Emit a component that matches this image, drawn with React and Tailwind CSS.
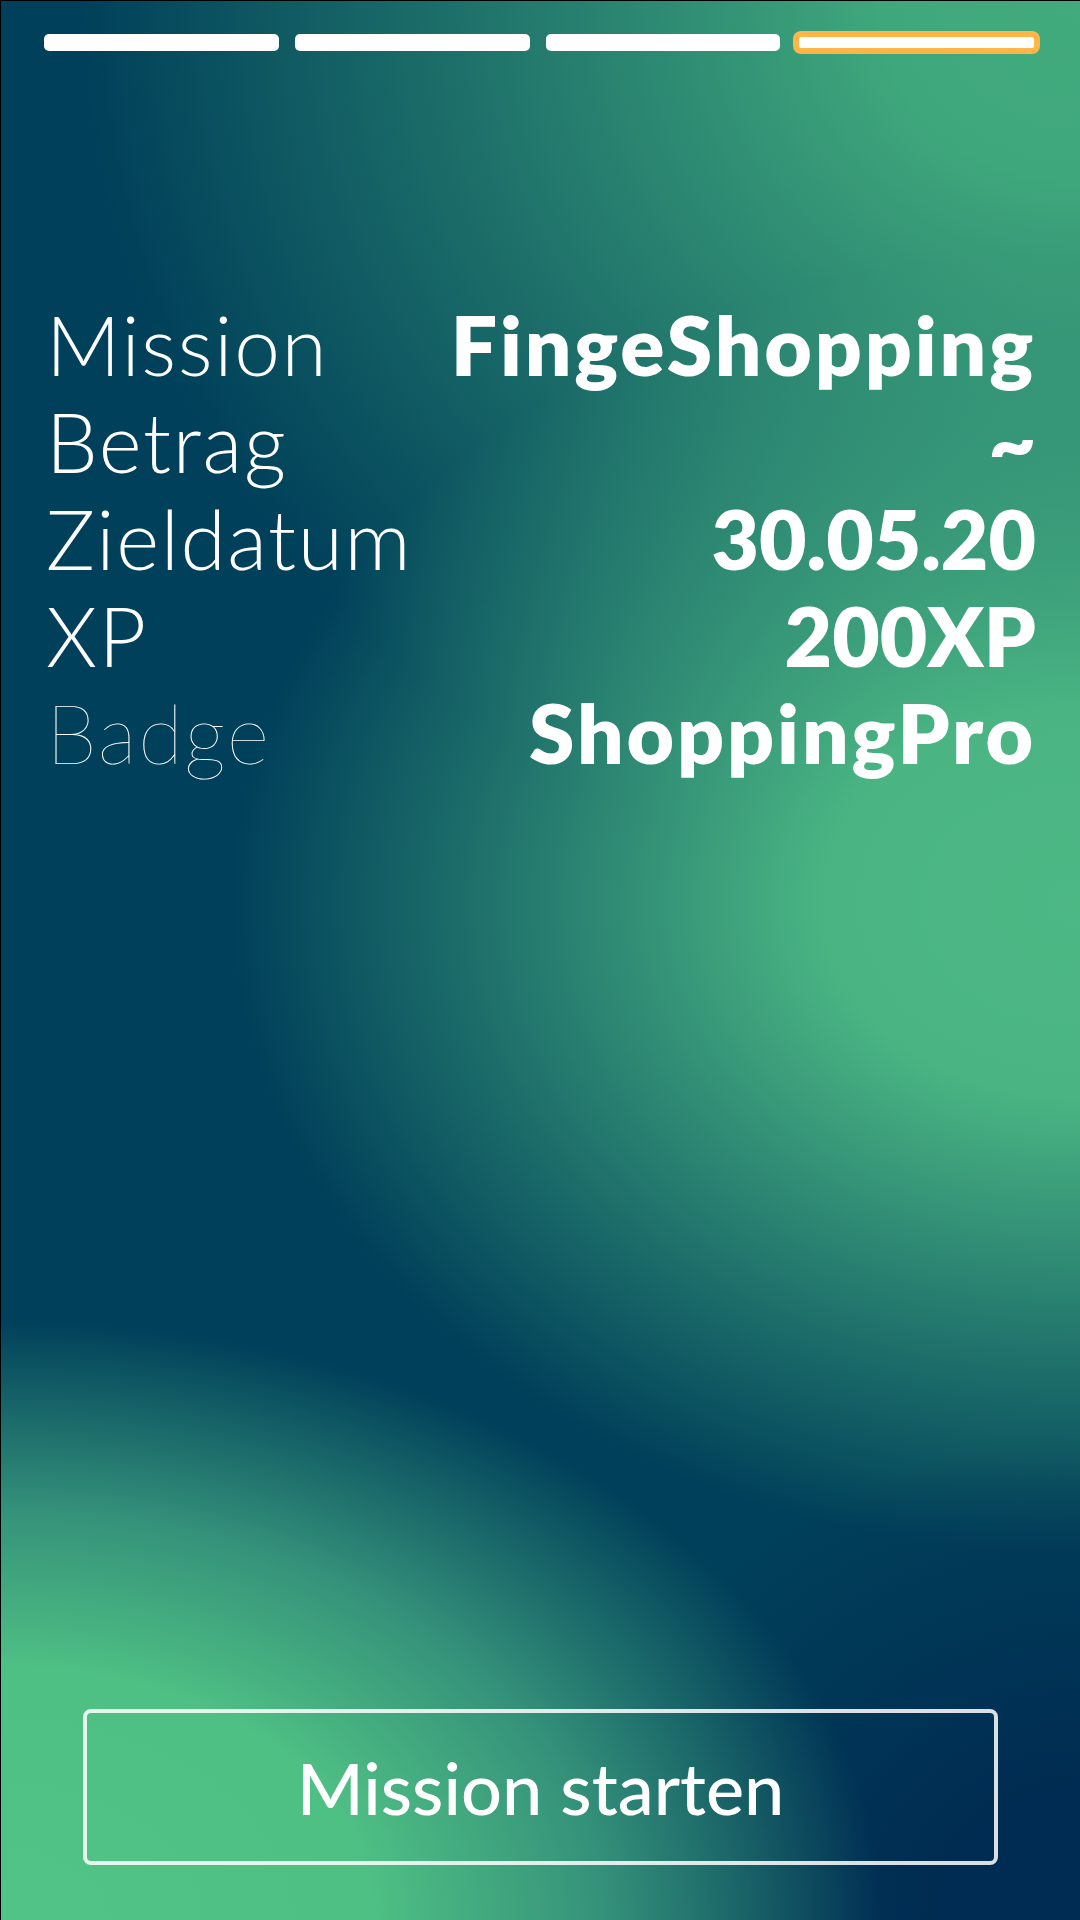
import React from "react";

const rows = [
  { label: "Mission", value: "FingeShopping", track: "tracking-[0.035em]", thin: false },
  { label: "Betrag", value: "~", track: "", thin: false },
  { label: "Zieldatum", value: "30.05.20", track: "", thin: false },
  { label: "XP", value: "200XP", track: "", thin: false },
  { label: "Badge", value: "ShoppingPro", track: "tracking-[0.035em]", thin: true },
];

export default function App() {
  return (
    <div
      className="flex flex-col w-[1080px] h-[1920px] overflow-hidden border-l border-t border-black text-white bg-[#00405a] bg-[radial-gradient(ellipse_880px_600px_at_0%_100%,#51c386_0%,#4fc084_42%,#35927a_68%,rgba(0,64,90,0)_100%),radial-gradient(ellipse_520px_480px_at_100%_100%,#002b52_0%,#002b52_25%,rgba(0,43,82,0)_100%),radial-gradient(ellipse_850px_650px_at_100%_47%,#4cb884_0%,#4ab583_30%,rgba(76,184,132,0)_100%),radial-gradient(ellipse_1000px_900px_at_100%_0%,#42ab7d_0%,#3fa77c_20%,rgba(61,164,123,0)_100%)]"
      style={{ fontFamily: "Lato, 'Open Sans', sans-serif" }}
    >
      {/* story progress */}
      <div className="flex gap-[16px] px-[43px] pt-[33px]">
        <div className="flex-1 h-[17px] rounded-[5px] bg-white" />
        <div className="flex-1 h-[17px] rounded-[5px] bg-white" />
        <div className="flex-1 h-[17px] rounded-[5px] bg-white" />
        <div className="flex-1 h-[17px] rounded-[5px] bg-white border-[3px] border-[#ffb547] ring-[3px] ring-[#ffb547]" />
      </div>

      {/* mission details */}
      <div className="mt-[245px] pl-[45px] pr-[44px]">
        {rows.map((r) => (
          <div key={r.label} className="flex justify-between items-baseline text-[82px] leading-[97px]">
            <span className={`tracking-[0.02em] ${r.thin ? "font-extralight" : "font-light"}`}>{r.label}</span>
            <span className={`font-extrabold ${r.track}`}>{r.value}</span>
          </div>
        ))}
      </div>

      {/* start button */}
      <div className="mt-auto mx-[82px] mb-[55px]">
        <button className="w-full h-[156px] rounded-[8px] border-[4px] border-white/85 text-[72px] font-medium text-white">
          Mission starten
        </button>
      </div>
    </div>
  );
}
